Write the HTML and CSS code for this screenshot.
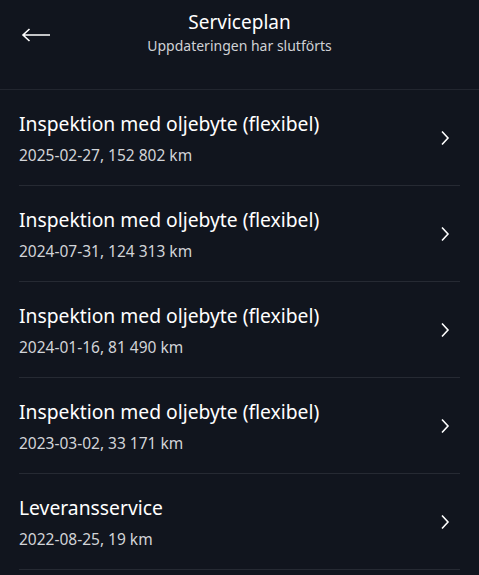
FILE: index.html
```html
<!DOCTYPE html>
<html lang="sv">
<head>
  <meta charset="UTF-8">
  <title>Serviceplan</title>
  <link rel="stylesheet" href="styles.css">
</head>
<body>

  <!-- sidhuvud -->
  <div class="header">
    <div class="back">
      <svg width="30" height="14" viewBox="0 0 30 14">
        <path d="M30 7H3M9.5 1L3 7l6.5 6" fill="none" stroke="#fff" stroke-width="1.6"/>
      </svg>
    </div>
    <div class="title">Serviceplan</div>
    <div class="subtitle">Uppdateringen har slutförts</div>
  </div>

  <!-- servicelista -->
  <div class="list">
    <div class="row">
      <div class="info">
        <div class="name">Inspektion med oljebyte (flexibel)</div>
        <div class="date">2025-02-27, 152 802 km</div>
      </div>
      <svg class="chevron" width="10" height="16" viewBox="0 0 10 16"><path d="M2 1.5l6 6.5-6 6.5" fill="none" stroke="#fff" stroke-width="1.6"/></svg>
    </div>
    <div class="row">
      <div class="info">
        <div class="name">Inspektion med oljebyte (flexibel)</div>
        <div class="date">2024-07-31, 124 313 km</div>
      </div>
      <svg class="chevron" width="10" height="16" viewBox="0 0 10 16"><path d="M2 1.5l6 6.5-6 6.5" fill="none" stroke="#fff" stroke-width="1.6"/></svg>
    </div>
    <div class="row">
      <div class="info">
        <div class="name">Inspektion med oljebyte (flexibel)</div>
        <div class="date">2024-01-16, 81 490 km</div>
      </div>
      <svg class="chevron" width="10" height="16" viewBox="0 0 10 16"><path d="M2 1.5l6 6.5-6 6.5" fill="none" stroke="#fff" stroke-width="1.6"/></svg>
    </div>
    <div class="row">
      <div class="info">
        <div class="name">Inspektion med oljebyte (flexibel)</div>
        <div class="date">2023-03-02, 33 171 km</div>
      </div>
      <svg class="chevron" width="10" height="16" viewBox="0 0 10 16"><path d="M2 1.5l6 6.5-6 6.5" fill="none" stroke="#fff" stroke-width="1.6"/></svg>
    </div>
    <div class="row">
      <div class="info">
        <div class="name">Leveransservice</div>
        <div class="date">2022-08-25, 19 km</div>
      </div>
      <svg class="chevron" width="10" height="16" viewBox="0 0 10 16"><path d="M2 1.5l6 6.5-6 6.5" fill="none" stroke="#fff" stroke-width="1.6"/></svg>
    </div>
  </div>

</body>
</html>
```

FILE: styles.css
```css
/* sidan */
body {
  margin: 0;
  background-color: #11151e;
  color: #fff;
  font-family: "Noto Sans", sans-serif;
}

/* sidhuvud */
.header {
  position: relative;
  height: 89px;
  border-bottom: 1px solid #22262f;
  text-align: center;
}

.back {
  position: absolute;
  left: 20px;
  top: 28px;
}

.back svg {
  display: block;
}

.title {
  padding-top: 9px;
  font-size: 19px;
  line-height: 26px;
}

.subtitle {
  margin-top: 1px;
  font-size: 14px;
  line-height: 20px;
  color: #cfd1d5;
}

/* lista */
.list {
  padding: 0 19px;
}

.row {
  display: flex;
  align-items: center;
  height: 95px;
  border-bottom: 1px solid #262a33;
}

.info {
  flex: 1;
  padding: 21px 0 20px;
}

.name {
  font-size: 19.3px;
  line-height: 26px;
}

.date {
  margin-top: 8px;
  font-size: 15.5px;
  line-height: 20px;
  color: #d2d4d8;
}

.chevron {
  display: block;
  margin-right: 10px;
}
```
